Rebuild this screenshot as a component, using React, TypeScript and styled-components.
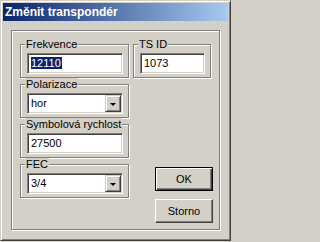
import React from "react";
import styled, { createGlobalStyle } from "styled-components";

const Global = createGlobalStyle`
  html, body {
    margin: 0;
    padding: 0;
    background: #d4d0c8;
  }
  body {
    font-family: "Liberation Sans", Arial, sans-serif;
    font-size: 11px;
    color: #000;
  }
  * { box-sizing: border-box; }
`;

const Window = styled.div`
  width: 231px;
  height: 241px;
  display: flex;
  flex-direction: column;
  background: #d4d0c8;
  border: 1px solid;
  border-color: #d4d0c8 #404040 #404040 #d4d0c8;
  box-shadow: inset 1px 1px 0 #ffffff, inset -1px -1px 0 #808080;
  padding: 2px;
`;

const TitleBar = styled.div`
  height: 18px;
  flex: none;
  display: flex;
  align-items: center;
  padding-left: 2px;
  background: linear-gradient(to right, #0a246a, #a6caf0);
  color: #ffffff;
  font-weight: bold;
  font-size: 12px;
  white-space: nowrap;
`;

const Client = styled.div`
  flex: 1;
  display: flex;
  padding: 9px 8px 8px 8px;
`;

const MainFrame = styled.div`
  flex: 1;
  display: flex;
  gap: 3px;
  border: 1px solid #808080;
  box-shadow: inset 1px 1px 0 #ffffff, 1px 1px 0 #ffffff;
  padding: 13px 6px 6px 8px;
`;

const LeftCol = styled.div`
  width: 110px;
  display: flex;
  flex-direction: column;
  gap: 6px;
`;

const RightCol = styled.div`
  flex: 1;
  display: flex;
  flex-direction: column;
  justify-content: space-between;
`;

const Group = styled.div<{ $w: number }>`
  position: relative;
  width: ${(p) => p.$w}px;
  border: 1px solid #808080;
  box-shadow: inset 1px 1px 0 #ffffff, 1px 1px 0 #ffffff;
  padding: 8px 5px 3px 6px;
`;

const GroupLabel = styled.span`
  position: absolute;
  top: -7px;
  left: 4px;
  padding: 0 1px;
  line-height: 13px;
  background: #d4d0c8;
  white-space: nowrap;
`;

const Sunken = styled.div`
  height: 21px;
  display: flex;
  align-items: center;
  background: #ffffff;
  border: 1px solid;
  border-color: #808080 #ffffff #ffffff #808080;
  box-shadow: inset 1px 1px 0 #404040, inset -1px -1px 0 #d4d0c8;
  padding: 2px;
  line-height: 13px;
`;

const EditText = styled.span`
  padding-left: 1px;
`;

const Selected = styled.span`
  background: #0a246a;
  color: #ffffff;
  padding: 0 1px 0 0;
  line-height: 13px;
`;

const ComboText = styled.span`
  flex: 1;
  padding-left: 1px;
`;

const DropButton = styled.div`
  width: 16px;
  height: 17px;
  display: flex;
  align-items: center;
  justify-content: center;
  background: #d4d0c8;
  border: 1px solid;
  border-color: #d4d0c8 #404040 #404040 #d4d0c8;
  box-shadow: inset 1px 1px 0 #ffffff, inset -1px -1px 0 #808080;
  margin-right: -1px;
`;

const Arrow = styled.div`
  width: 0;
  height: 0;
  border-left: 3px solid transparent;
  border-right: 3px solid transparent;
  border-top: 3px solid #000000;
  margin-top: 1px;
`;

const Buttons = styled.div`
  display: flex;
  flex-direction: column;
  align-items: flex-end;
  gap: 8px;
`;

const Button = styled.div<{ $default?: boolean }>`
  width: 58px;
  height: 24px;
  display: flex;
  align-items: center;
  justify-content: center;
  background: #d4d0c8;
  border: 1px solid;
  border-color: ${(p) =>
    p.$default ? "#000000" : "#ffffff #404040 #404040 #ffffff"};
  box-shadow: ${(p) =>
    p.$default
      ? "inset 1px 1px 0 #ffffff, inset -1px -1px 0 #404040, inset -2px -2px 0 #808080"
      : "inset -1px -1px 0 #808080"};
  font-size: 11px;
`;

const Edit = ({ children }: { children: React.ReactNode }) => (
  <Sunken>{children}</Sunken>
);

const Combo = ({ value }: { value: string }) => (
  <Sunken>
    <ComboText>{value}</ComboText>
    <DropButton>
      <Arrow />
    </DropButton>
  </Sunken>
);

export default function App() {
  return (
    <>
      <Global />
      <Window>
        <TitleBar>Změnit transpondér</TitleBar>
        <Client>
          <MainFrame>
            <LeftCol>
              <Group $w={109}>
                <GroupLabel>Frekvence</GroupLabel>
                <Edit>
                  <EditText>
                    <Selected>12110</Selected>
                  </EditText>
                </Edit>
              </Group>
              <Group $w={109}>
                <GroupLabel>Polarizace</GroupLabel>
                <Combo value="hor" />
              </Group>
              <Group $w={109}>
                <GroupLabel>Symbolová rychlost</GroupLabel>
                <Edit>
                  <EditText>27500</EditText>
                </Edit>
              </Group>
              <Group $w={109}>
                <GroupLabel>FEC</GroupLabel>
                <Combo value="3/4" />
              </Group>
            </LeftCol>
            <RightCol>
              <Group $w={78}>
                <GroupLabel>TS ID</GroupLabel>
                <Edit>
                  <EditText>1073</EditText>
                </Edit>
              </Group>
              <Buttons>
                <Button $default>OK</Button>
                <Button>Storno</Button>
              </Buttons>
            </RightCol>
          </MainFrame>
        </Client>
      </Window>
    </>
  );
}
